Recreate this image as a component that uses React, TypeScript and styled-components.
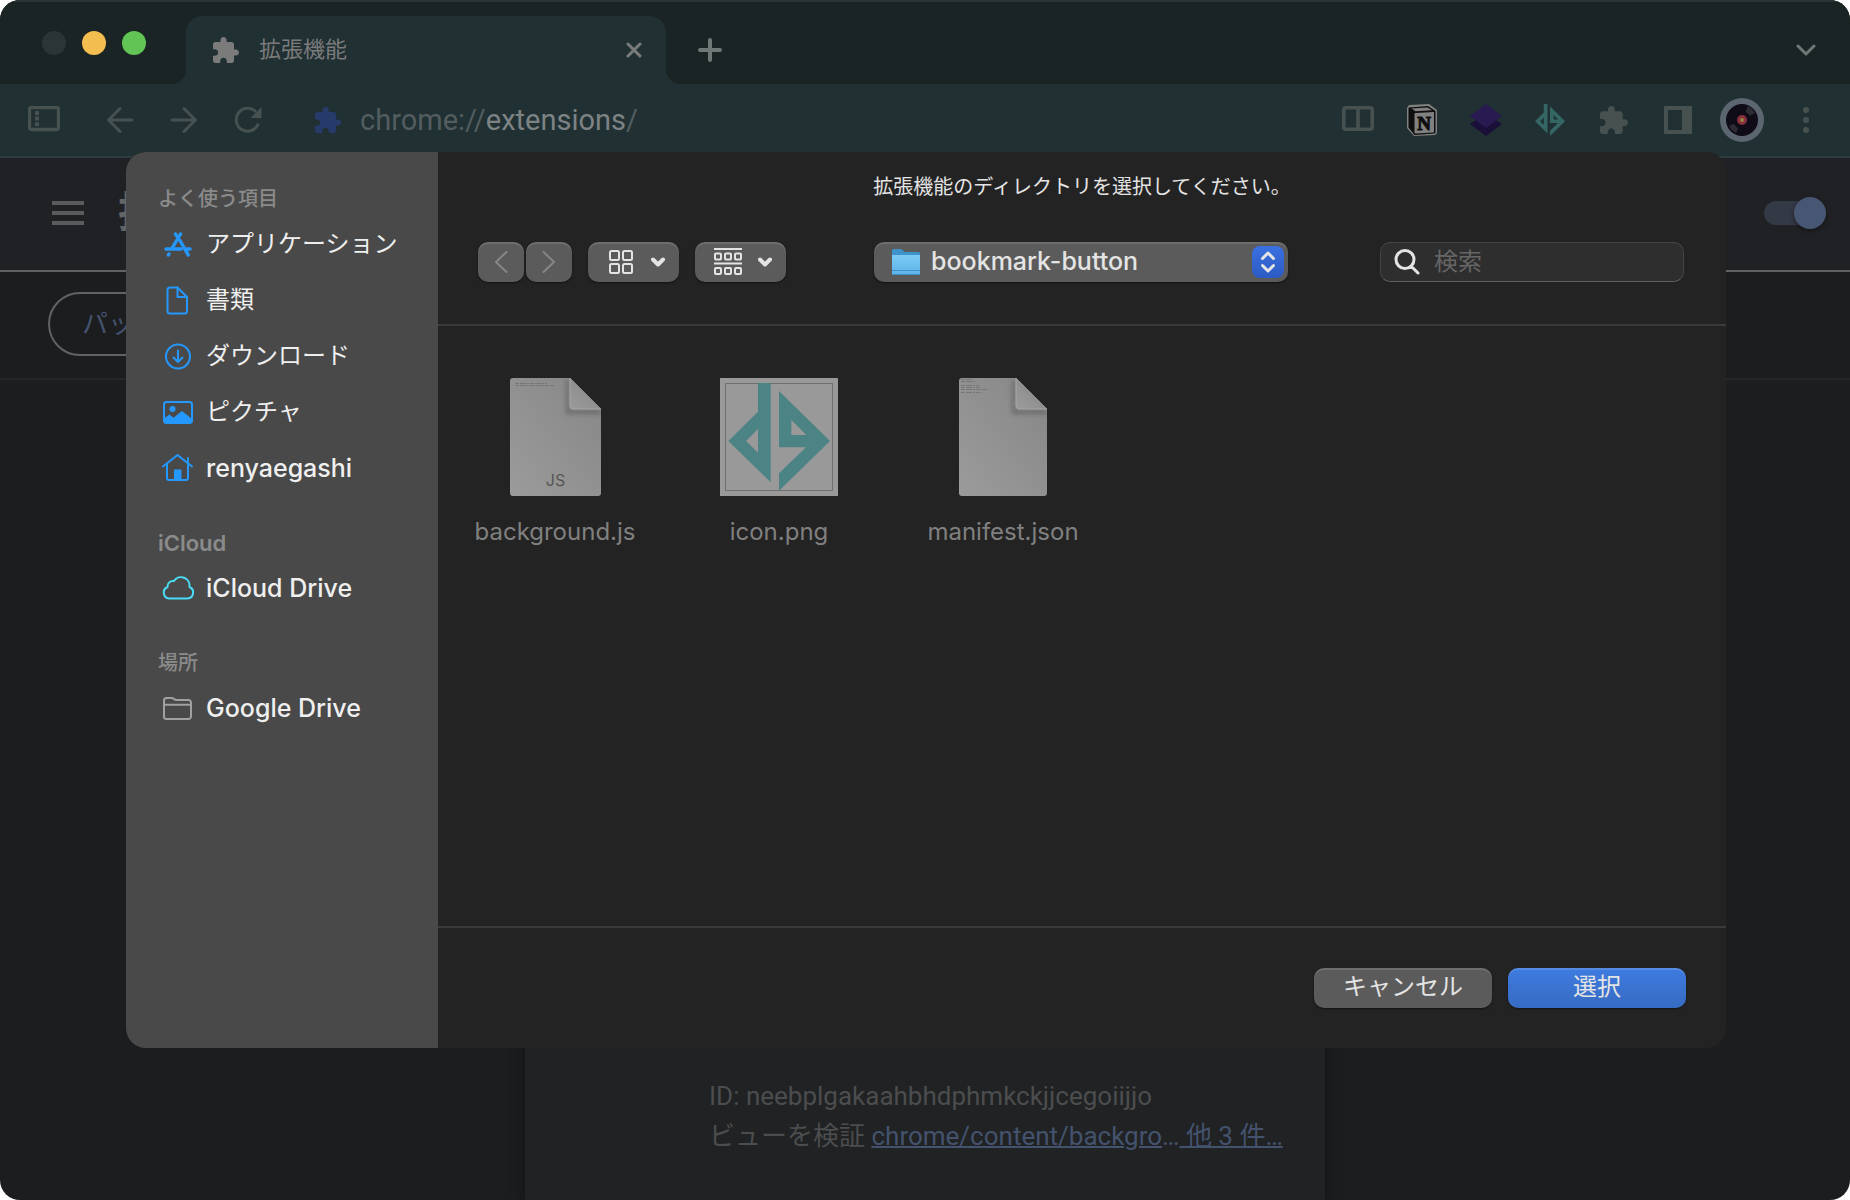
import React from "react";
import styled, { createGlobalStyle, css } from "styled-components";

const uiFont = `Inter, "Noto Sans CJK JP", sans-serif`;
const pageFont = `Roboto, "Noto Sans CJK JP", sans-serif`;

const GlobalStyle = createGlobalStyle`
  *, *::before, *::after { box-sizing: border-box; }
  body { margin: 0; background: #fff; }
  button, input, select { font: inherit; color: inherit; margin: 0; }
  button { border: 0; padding: 0; background: none; }
  h1, h2, p, ul { margin: 0; padding: 0; }
  svg { display: block; flex: none; }
`;

/* ---------- Browser window ---------- */

const BrowserWindow = styled.div`
  position: relative;
  display: flex;
  flex-direction: column;
  height: 100vh;
  min-height: 900px;
  overflow: hidden;
  border-radius: 20px;
  background: #1c1d1f;
  font-family: ${pageFont};
  line-height: 32px;
`;

const TabStrip = styled.header`
  display: flex;
  align-items: stretch;
  height: 84px;
  padding: 16px 22px 0 42px;
  background: #1a2424;
  box-shadow: inset 0 2px 0 #273536;
  color: #6f7777;
`;

const TrafficLights = styled.div`
  display: flex;
  gap: 16px;
  margin: 15px 40px 0 0;
`;

const Light = styled.button<{ $color: string }>`
  width: 24px;
  height: 24px;
  border-radius: 50%;
  background: ${(p) => p.$color};
`;

const Tab = styled.div`
  position: relative;
  display: flex;
  align-items: center;
  gap: 20px;
  width: 480px;
  padding: 0 24px 0 27px;
  border-radius: 16px 16px 0 0;
  background: #203033;
  color: #7b7b7b;
  font-size: 22px;

  &::before,
  &::after {
    content: "";
    position: absolute;
    bottom: 0;
    width: 14px;
    height: 14px;
  }
  &::before {
    left: -14px;
    background: radial-gradient(circle at 0 0, transparent 14px, #203033 14px);
  }
  &::after {
    right: -14px;
    background: radial-gradient(circle at 100% 0, transparent 14px, #203033 14px);
  }
`;

const TabTitle = styled.span`
  flex: 1;
`;

const NewTab = styled.button`
  margin: 0 auto 0 32px;
`;

const ToolbarButton = styled.button<{ $wide?: boolean }>`
  display: flex;
  align-items: center;
  justify-content: center;
  width: ${(p) => (p.$wide ? 44 : 32)}px;
`;

const Toolbar = styled.nav`
  display: flex;
  align-items: center;
  height: 74px;
  padding: 0 22px 0 28px;
  border-bottom: 2px solid #2d3d3f;
  background: #203033;
  color: #465150;
`;

const NavGroup = styled.div`
  display: flex;
  gap: 32px;
  margin-left: 44px;
`;

const AddressBar = styled.button`
  display: flex;
  flex: 1;
  align-items: center;
  gap: 19px;
  margin-left: 51px;
  color: #535d5f;
  font-size: 29px;
  text-align: left;
`;

const AddressHost = styled.span`
  color: #7d8284;
`;

const ExtensionGroup = styled.div`
  display: flex;
  align-items: center;
  gap: 20px;
`;

/* ---------- Extensions page ---------- */

const PageHeader = styled.header`
  display: flex;
  align-items: center;
  height: 114px;
  padding: 0 24px 2px 52px;
  border-bottom: 2px solid #5f6162;
  background: #202124;
  color: #5a5b5d;
`;

const PageTitle = styled.h1`
  margin: 0 auto 0 34px;
  color: #646567;
  font-size: 42px;
  font-weight: 700;
  line-height: 48px;
`;

const DevSwitch = styled.input`
  display: flex;
  align-items: center;
  justify-content: flex-end;
  appearance: none;
  width: 62px;
  height: 24px;
  border-radius: 12px;
  background: #333945;

  &::after {
    content: "";
    width: 32px;
    height: 32px;
    flex: none;
    border-radius: 50%;
    background: #475672;
    box-shadow: 0 2px 5px rgba(0, 0, 0, 0.4);
  }
`;

const DevToolbar = styled.div`
  display: flex;
  align-items: center;
  height: 108px;
  padding: 0 48px 2px;
  border-bottom: 2px solid #242628;
`;

const OutlineButton = styled.button`
  height: 64px;
  padding: 0 32px;
  border: 2px solid #606264;
  border-radius: 32px;
  color: #44526e;
  font-size: 26px;
  white-space: nowrap;
`;

const CardArea = styled.main`
  display: flex;
  flex: 1;
  justify-content: center;
  padding-top: 40px;
`;

const ExtensionCard = styled.article`
  display: flex;
  flex-direction: column;
  justify-content: flex-end;
  width: 800px;
  padding: 0 32px 44px 184px;
  background: #202223;
  box-shadow: 0 2px 14px rgba(0, 0, 0, 0.35);
  color: #4c4d4e;
  font-size: 26px;
  line-height: 40px;
  white-space: nowrap;
`;

const InspectLink = styled.a`
  color: #44526e;
  text-decoration-thickness: 2px;
`;

const Ellipsis = styled.span`
  display: inline-block;
`;

/* ---------- File chooser dialog ---------- */

const Dialog = styled.section`
  position: absolute;
  inset: 152px 124px 152px 126px;
  display: flex;
  overflow: hidden;
  border-radius: 20px;
  background: #232323;
  color: #e4e4e4;
  font-family: ${uiFont};
  font-size: 24px;
`;

const Sidebar = styled.aside`
  display: flex;
  flex-direction: column;
  flex: none;
  gap: 28px;
  width: 312px;
  padding: 28px 32px;
  background: #494949;
`;

const SidebarHeading = styled.h2<{ $latin: boolean }>`
  padding-top: 2px;
  color: #8b8b8b;
  font-size: ${(p) => (p.$latin ? 22 : 20)}px;
  font-weight: ${(p) => (p.$latin ? 600 : 500)};
  line-height: 34px;
`;

const SidebarList = styled.ul`
  list-style: none;
`;

const SidebarLink = styled.button<{ $tint: string; $latin: boolean }>`
  display: flex;
  align-items: center;
  gap: 10px;
  height: 56px;
  padding-left: 2px;
  color: #efefef;
  font-size: ${(p) => (p.$latin ? 25 : 24)}px;
  font-weight: ${(p) => (p.$latin ? 500 : 400)};
  white-space: nowrap;

  svg {
    width: 36px;
    color: ${(p) => p.$tint};
  }
`;

const Chooser = styled.div`
  display: flex;
  flex: 1;
  flex-direction: column;
  min-width: 0;
`;

const Message = styled.h2`
  padding: 20px 40px 0;
  font-size: 20px;
  font-weight: 400;
  line-height: 30px;
  text-align: center;
`;

const ControlBar = styled.div`
  display: grid;
  grid-template-columns: 1fr 414px 1fr;
  align-items: center;
  height: 124px;
  padding: 0 42px 2px 40px;
  border-bottom: 2px solid #3a3a3a;
`;

const ControlGroup = styled.div`
  display: flex;
  gap: 16px;
`;

const ButtonPair = styled.div`
  display: flex;
  gap: 2px;
`;

const raised = css`
  height: 40px;
  border-radius: 10px;
  background: #5b5b5b;
  box-shadow: inset 0 2px 0 rgba(255, 255, 255, 0.12), 0 1px 2px rgba(0, 0, 0, 0.5);
`;

const HistoryButton = styled.button`
  ${raised}
  display: flex;
  align-items: center;
  justify-content: center;
  width: 46px;
  color: #868686;
`;

const ViewButton = styled.button`
  ${raised}
  display: flex;
  align-items: center;
  gap: 16px;
  padding: 0 14px 0 19px;
`;

const FolderPicker = styled.label`
  ${raised}
  position: relative;
  display: block;

  > svg {
    position: absolute;
    top: 7px;
    left: 18px;
    pointer-events: none;
  }
`;

const FolderSelect = styled.select`
  appearance: none;
  width: 100%;
  height: 40px;
  padding: 0 48px 2px 57px;
  border: 0;
  background: none;
  font-size: 25px;
  font-weight: 500;
`;

const Stepper = styled.span`
  position: absolute;
  top: 4px;
  right: 4px;
  display: flex;
  align-items: center;
  justify-content: center;
  width: 32px;
  height: 32px;
  border-radius: 8px;
  background: linear-gradient(#3a70e0, #2c5bc4);
  pointer-events: none;
`;

const SearchField = styled.label`
  display: flex;
  align-items: center;
  gap: 14px;
  justify-self: end;
  width: 304px;
  height: 40px;
  padding: 0 13px;
  border: 1px solid #444;
  border-bottom-color: #606060;
  border-radius: 10px;
  background: #2e2e2e;
`;

const SearchInput = styled.input`
  flex: 1;
  min-width: 0;
  padding: 0;
  border: 0;
  outline: 0;
  background: none;

  &::placeholder {
    color: #666;
    opacity: 1;
  }
`;

const FileGrid = styled.ul`
  display: flex;
  flex: 1;
  flex-wrap: wrap;
  align-content: flex-start;
  padding: 52px 5px;
  list-style: none;
`;

const FileItem = styled.li`
  display: flex;
  flex-direction: column;
  align-items: center;
  gap: 20px;
  width: 224px;
  color: #808080;
`;

const Footer = styled.footer`
  display: flex;
  justify-content: flex-end;
  gap: 16px;
  height: 122px;
  padding: 40px 40px 0;
  border-top: 2px solid #3a3a3a;
`;

const DialogButton = styled.button<{ $primary?: boolean }>`
  ${raised}
  width: 178px;
  padding-bottom: 2px;
  ${(p) => p.$primary && "background: linear-gradient(#3e7be0, #366bc2);"}
`;

/* ---------- Drawings ---------- */

const PuzzleIcon = ({ size, color = "currentColor" }: { size: number; color?: string }) => (
  <svg width={size} height={size} viewBox="2 1 21 21" fill={color} aria-hidden="true">
    <path d="M20.5 11H19V7c0-1.1-.9-2-2-2h-4V3.5C13 2.12 11.88 1 10.5 1S8 2.12 8 3.5V5H4c-1.1 0-1.99.9-1.99 2v3.8H3.5c1.49 0 2.7 1.21 2.7 2.7s-1.21 2.7-2.7 2.7H2V20c0 1.1.9 2 2 2h3.8v-1.5c0-1.49 1.21-2.7 2.7-2.7 1.49 0 2.7 1.21 2.7 2.7V22H17c1.1 0 2-.9 2-2v-4h1.5c1.38 0 2.5-1.12 2.5-2.5S21.88 11 20.5 11z" />
  </svg>
);

type StrokeProps = {
  w: number;
  h: number;
  d: string;
  width?: number;
  cap?: "round" | "butt";
};

const StrokeIcon = ({ w, h, d, width = 3, cap = "round" }: StrokeProps) => (
  <svg
    width={w}
    height={h}
    viewBox={`0 0 ${w} ${h}`}
    fill="none"
    stroke="currentColor"
    strokeWidth={width}
    strokeLinecap={cap}
    strokeLinejoin="round"
    aria-hidden="true"
  >
    <path d={d} />
  </svg>
);

const SidePanelListIcon = () => (
  <svg width="32" height="28" viewBox="0 0 32 28" fill="none" stroke="currentColor" aria-hidden="true">
    <rect x="1.5" y="1.5" width="29" height="22" rx="2" strokeWidth="3.4" />
    <path d="M9 5v15" strokeWidth="4" strokeDasharray="4 1.6" />
  </svg>
);

const ReloadIcon = () => (
  <svg width="28" height="28" viewBox="0 0 28 28" fill="none" aria-hidden="true">
    <path d="M24.4 17.5A11.4 11.4 0 1 1 22 6" stroke="currentColor" strokeWidth="3" />
    <path d="M27.5 1v11h-11z" fill="currentColor" />
  </svg>
);

const SplitIcon = () => (
  <svg width="32" height="28" viewBox="0 0 32 28" fill="none" stroke="currentColor" strokeWidth="3.6" aria-hidden="true">
    <rect x="1.8" y="1.8" width="28.4" height="21.4" rx="2" />
    <path d="M16 2v21" />
  </svg>
);

const NotionIcon = () => (
  <svg width="32" height="32" viewBox="0 0 32 32" aria-hidden="true">
    <path d="M3 1 23 0 31 6v23l-2 2-21 1-7-8V4z" fill="#818181" />
    <path d="M3 3.5 22 2l7.5 5v21.5l-1 1L8.500 31 2.500 23.500V4z" fill="#0e0e0e" />
    <path d="M5.500 4.500 21.500 3.500 26 6.200 9.500 7.200z" fill="#818181" />
    <path d="M8.500 10q0-1 1-1L28 8v19.500q0 1-1 1L9.500 29.400q-1 0-1-1z" fill="#818181" />
    <text x="18.200" y="25.500" fontSize="19" fontWeight="700" fontFamily="Liberation Serif, serif" textAnchor="middle" fill="#0e0e0e" stroke="#0e0e0e">
      N
    </text>
  </svg>
);

const LayersIcon = () => (
  <svg width="32" height="32" viewBox="0 0 32 32" aria-hidden="true">
    <path d="M16 9.500 32 20 16 32 0 20z" fill="#190f38" />
    <path d="M16 0 32 12 16 24 0 12z" fill="#291a51" />
  </svg>
);

const dgPath =
  "M777 39h38v298L688 213l89-88zM777 177l-36 36 36 35zM840 63l153 150-153 149v-52l81-78h-81zM877 150v45h45z";

const DgIcon = () => (
  <svg width="32" height="32" viewBox="678 39 324 324" fill="#346664" fillRule="evenodd" aria-hidden="true">
    <path d={dgPath} />
  </svg>
);

const SidePanelIcon = () => (
  <svg width="28" height="28" viewBox="0 0 28 28" fill="currentColor" fillRule="evenodd" aria-hidden="true">
    <path d="M0 0h28v28H0zM4 4v20h14V4z" />
  </svg>
);

const VinylAvatar = () => (
  <svg width="44" height="44" viewBox="0 0 44 44" aria-hidden="true">
    <circle cx="22" cy="22" r="22" fill="#5b6670" />
    <circle cx="22" cy="22" r="16" fill="#0f0c18" />
    <path d="M22 22 28 8a15 15 0 0 1 7 7z" fill="#2c2b33" />
    <path d="M22 22 9 28a15 15 0 0 0 7 7z" fill="#2c2b33" />
    <circle cx="22" cy="22" r="9" fill="#0f0c18" />
    <circle cx="22" cy="22" r="5" fill="#88303f" />
    <circle cx="22" cy="22" r="2" fill="#97843f" />
  </svg>
);

const MoreIcon = () => (
  <svg width="6" height="28" viewBox="0 0 6 28" fill="currentColor" aria-hidden="true">
    <circle cx="3" cy="4" r="3" />
    <circle cx="3" cy="14" r="3" />
    <circle cx="3" cy="24" r="3" />
  </svg>
);

const MenuIcon = () => (
  <svg width="32" height="24" viewBox="0 0 32 24" fill="currentColor" aria-hidden="true">
    <path d="M0 0h32v4H0zM0 10h32v4H0zM0 20h32v4H0z" />
  </svg>
);

const sideSvg = {
  height: 32,
  width: 36,
  viewBox: "0 0 36 32",
  fill: "none",
  stroke: "currentColor",
  strokeWidth: 2,
  strokeLinecap: "round" as const,
  strokeLinejoin: "round" as const,
  "aria-hidden": true,
};

const AppsIcon = () => (
  <svg {...sideSvg} strokeWidth={3.4}>
    <path d="M20.500 6 12.500 19.500M9 26l-.6 1M15.500 6l1.200 2M20 12.500l8.200 14.500M6 21h15M26.500 21h3.500" />
  </svg>
);
const DocIcon = () => (
  <svg {...sideSvg}>
    <path d="M10 3.500h7.500L27 13v14a2.500 2.500 0 0 1-2.500 2.500H10A2.500 2.500 0 0 1 7.500 27V6A2.500 2.500 0 0 1 10 3.500z" />
    <path d="M17.500 3.500V13H27" />
  </svg>
);
const DownloadIcon = () => (
  <svg {...sideSvg}>
    <circle cx="18" cy="16.500" r="12" />
    <path d="M18 10.500V22M13.500 17.500l4.500 4.500 4.500-4.500" />
  </svg>
);
const PictureIcon = () => (
  <svg {...sideSvg}>
    <rect x="4" y="6" width="28" height="21" rx="2.500" />
    <circle cx="12.500" cy="13" r="3" fill="currentColor" stroke="none" />
    <path d="M4 22.500l5.500-4 4 3.200 8.500-6.700 10 8v2.500q0 1.500-1.500 1.500h-25Q4 27 4 25.500z" fill="currentColor" stroke="none" />
  </svg>
);
const HomeIcon = () => (
  <svg {...sideSvg}>
    <path d="M3 14.500 17.500 3 32 14.500M7 12.500V26a2 2 0 0 0 2 2h17a2 2 0 0 0 2-2V12.500M28 10.500V6" />
    <path d="M14 28V17.500h7.500V28z" fill="currentColor" stroke="none" />
  </svg>
);
const CloudIcon = () => (
  <svg {...sideSvg}>
    <path d="M9 26.500a6 6 0 0 1-1.500-11.500 5.500 5.500 0 0 1 6.500-6A8.500 8.500 0 0 1 29.500 15 6 6 0 0 1 27.500 26.500z" />
  </svg>
);
const FolderIcon = () => (
  <svg {...sideSvg}>
    <path d="M4 24.500v-16A2.500 2.500 0 0 1 6.500 6h5q1.500 0 2.500 1t2.500 1h12A2.500 2.500 0 0 1 31 10.500v14A2.500 2.500 0 0 1 28.500 27h-22A2.500 2.500 0 0 1 4 24.500zM4 12.800h27" />
  </svg>
);

const GridViewIcon = () => (
  <svg width="28" height="28" viewBox="0 0 28 28" fill="none" stroke="currentColor" strokeWidth="2" aria-hidden="true">
    <rect x="3" y="3" width="9" height="9" rx="1.500" />
    <rect x="16" y="3" width="9" height="9" rx="1.500" />
    <rect x="3" y="16" width="9" height="9" rx="1.500" />
    <rect x="16" y="16" width="9" height="9" rx="1.500" />
  </svg>
);

const GroupViewIcon = () => (
  <svg width="28" height="28" viewBox="0 0 28 28" fill="none" stroke="currentColor" strokeWidth="2" aria-hidden="true">
    <path d="M0 1h28M0 15.500h28" />
    {[5.500, 20].map((y) =>
      [1, 11, 21].map((x) => <rect key={`${x}-${y}`} x={x} y={y} width="6" height="6" rx="1" />),
    )}
  </svg>
);

const ChevronDown = () => <StrokeIcon w={14} h={10} width={4} d="M2 2.500l5 5 5-5" />;

const BlueFolder = () => (
  <svg width="28" height="27" viewBox="0 0 28 27" aria-hidden="true">
    <defs>
      <linearGradient id="folder-front" x1="0" y1="0" x2="0" y2="1">
        <stop offset="0" stopColor="#7ccbf5" />
        <stop offset="1" stopColor="#5bb3e6" />
      </linearGradient>
    </defs>
    <path d="M0 1.500Q0 0 1.500 0h7q1.500 0 2.500 1.500T14 3h12.500Q28 3 28 4.500V25H0z" fill="#3f93cb" />
    <path d="M0 6h28v19q0 1-1 1H1q-1 0-1-1z" fill="url(#folder-front)" />
    <path d="M0 21.500h28M0 25.500h28" stroke="#3f93cb" />
  </svg>
);

const DocumentThumb = ({ width, label, lines }: { width: number; label?: string; lines: string }) => (
  <svg width={width} height="118" viewBox={`0 0 ${width} 118`} aria-hidden="true">
    <defs>
      <linearGradient id={`paper-${width}`} x1="1" y1="0" x2="0" y2="1">
        <stop offset="0" stopColor="#868686" />
        <stop offset="1" stopColor="#9b9b9b" />
      </linearGradient>
      <linearGradient id={`fold-${width}`} x1="0" y1="1" x2="1" y2="0">
        <stop offset="0" stopColor="#9b9b9b" />
        <stop offset="1" stopColor="#858585" />
      </linearGradient>
      <filter id={`soft-${width}`} x="-50%" y="-50%" width="200%" height="200%">
        <feGaussianBlur stdDeviation="2" />
      </filter>
      <clipPath id={`clip-${width}`}>
        <path d={`M3 0h${width - 34}l31 31v84q0 3-3 3H3q-3 0-3-3V3q0-3 3-3z`} />
      </clipPath>
    </defs>
    <g clipPath={`url(#clip-${width})`}>
      <rect width={width} height="118" fill={`url(#paper-${width})`} />
      <path d={`M${width - 32} 2v30h32v4h-35V2z`} fill="#555" opacity="0.6" filter={`url(#soft-${width})`} />
      <path d={`M${width - 31} 0v28q0 3 3 3h28z`} fill={`url(#fold-${width})`} stroke="#a5a5a5" />
      <path d={lines} stroke="#666" strokeOpacity="0.6" strokeDasharray="4 1 6 1 2 1" />
    </g>
    {label && (
      <text x={width / 2} y="108" fontSize="16" fontFamily="Inter, sans-serif" textAnchor="middle" fill="#565656">
        {label}
      </text>
    )}
  </svg>
);

const ImageThumb = () => (
  <svg width="118" height="118" viewBox="0 0 118 118" aria-hidden="true">
    <rect width="118" height="118" fill="#999" />
    <rect x="5.500" y="5.500" width="107" height="107" fill="none" stroke="#717171" />
    <svg x="5" y="5" width="108" height="108" viewBox="678 39 324 324" fill="#4c8384" fillRule="evenodd">
      <path d={dgPath} />
    </svg>
  </svg>
);

/* ---------- Data ---------- */

const blue = "#2498fd";

const sections = [
  {
    title: "よく使う項目",
    items: [
      { name: "アプリケーション", tint: blue, Icon: AppsIcon },
      { name: "書類", tint: blue, Icon: DocIcon },
      { name: "ダウンロード", tint: blue, Icon: DownloadIcon },
      { name: "ピクチャ", tint: blue, Icon: PictureIcon },
      { name: "renyaegashi", tint: blue, Icon: HomeIcon },
    ],
  },
  { title: "iCloud", items: [{ name: "iCloud Drive", tint: "#4bdcf5", Icon: CloudIcon }] },
  { title: "場所", items: [{ name: "Google Drive", tint: "#a0a0a0", Icon: FolderIcon }] },
];

const isLatin = (text: string) => /^[\x20-\x7e]+$/.test(text);

const files = [
  { name: "background.js", thumb: <DocumentThumb width={91} label="JS" lines="M5 5.500h32M5 7.500h39" /> },
  { name: "icon.png", thumb: <ImageThumb /> },
  {
    name: "manifest.json",
    thumb: <DocumentThumb width={88} lines="M2 1.500h12M2 3.500h14M2 7.500h18M2 9.500h20M2 11.500h26M2 14.500h21" />,
  },
];

export default function App() {
  return (
    <>
      <GlobalStyle />
      <BrowserWindow>
        <TabStrip>
          <TrafficLights>
            <Light $color="#2b3535" aria-label="閉じる" />
            <Light $color="#f4bd50" aria-label="しまう" />
            <Light $color="#61c454" aria-label="拡大" />
          </TrafficLights>
          <Tab>
            <PuzzleIcon size={26} />
            <TabTitle>拡張機能</TabTitle>
            <button aria-label="タブを閉じる">
              <StrokeIcon w={16} h={16} d="M2 2l12 12M14 2 2 14" />
            </button>
          </Tab>
          <NewTab aria-label="新しいタブ">
            <StrokeIcon w={24} h={24} width={4} d="M12 2v20M2 12h20" />
          </NewTab>
          <ToolbarButton $wide aria-label="タブを検索">
            <StrokeIcon w={20} h={14} d="M2 3l8 8 8-8" />
          </ToolbarButton>
        </TabStrip>

        <Toolbar>
          <ToolbarButton aria-label="サイドバー">
            <SidePanelListIcon />
          </ToolbarButton>
          <NavGroup>
            <ToolbarButton aria-label="戻る">
              <StrokeIcon w={28} h={28} d="M26 14H3M14 2.500 2.500 14 14 25.500" />
            </ToolbarButton>
            <ToolbarButton aria-label="進む">
              <StrokeIcon w={28} h={28} d="M2 14h23M14 2.500 25.500 14 14 25.500" />
            </ToolbarButton>
            <ToolbarButton aria-label="再読み込み">
              <ReloadIcon />
            </ToolbarButton>
          </NavGroup>
          <AddressBar>
            <PuzzleIcon size={26} color="#273b6b" />
            <span>
              chrome://<AddressHost>extensions</AddressHost>/
            </span>
          </AddressBar>
          <ExtensionGroup>
            <ToolbarButton $wide aria-label="分割表示">
              <SplitIcon />
            </ToolbarButton>
            <ToolbarButton $wide aria-label="Notion">
              <NotionIcon />
            </ToolbarButton>
            <ToolbarButton $wide aria-label="レイヤー">
              <LayersIcon />
            </ToolbarButton>
            <ToolbarButton $wide aria-label="bookmark-button">
              <DgIcon />
            </ToolbarButton>
            <ToolbarButton $wide aria-label="拡張機能">
              <PuzzleIcon size={28} />
            </ToolbarButton>
            <ToolbarButton $wide aria-label="サイドパネル">
              <SidePanelIcon />
            </ToolbarButton>
            <ToolbarButton $wide aria-label="プロフィール">
              <VinylAvatar />
            </ToolbarButton>
            <ToolbarButton $wide aria-label="メニュー">
              <MoreIcon />
            </ToolbarButton>
          </ExtensionGroup>
        </Toolbar>

        <PageHeader>
          <button aria-label="メインメニュー">
            <MenuIcon />
          </button>
          <PageTitle>拡張機能</PageTitle>
          <DevSwitch type="checkbox" role="switch" aria-label="デベロッパー モード" defaultChecked />
        </PageHeader>
        <DevToolbar>
          <OutlineButton>パッケージ化されていない拡張機能を読み込む</OutlineButton>
        </DevToolbar>
        <CardArea>
          <ExtensionCard>
            <p>ID: neebplgakaahbhdphmkckjjcegoiijjo</p>
            <p>
              ビューを検証{" "}
              <InspectLink href="#background">
                chrome/content/backgro<Ellipsis>…</Ellipsis>
              </InspectLink>
              <InspectLink href="#more"> 他 3 件…</InspectLink>
            </p>
          </ExtensionCard>
        </CardArea>

        <Dialog role="dialog" aria-labelledby="dialog-message">
          <Sidebar>
            {sections.map((section) => (
              <section key={section.title}>
                <SidebarHeading $latin={isLatin(section.title)}>{section.title}</SidebarHeading>
                <SidebarList>
                  {section.items.map(({ name, tint, Icon }) => (
                    <li key={name}>
                      <SidebarLink $tint={tint} $latin={isLatin(name)}>
                        <Icon />
                        {name}
                      </SidebarLink>
                    </li>
                  ))}
                </SidebarList>
              </section>
            ))}
          </Sidebar>

          <Chooser>
            <Message id="dialog-message">拡張機能のディレクトリを選択してください。</Message>
            <ControlBar>
              <ControlGroup>
                <ButtonPair>
                  <HistoryButton aria-label="戻る">
                    <StrokeIcon w={14} h={24} width={2} d="M12.500 2 2 12l10.500 10" />
                  </HistoryButton>
                  <HistoryButton aria-label="進む">
                    <StrokeIcon w={14} h={24} width={2} d="M1.500 2 12 12 1.500 22" />
                  </HistoryButton>
                </ButtonPair>
                <ViewButton aria-label="アイコン表示">
                  <GridViewIcon />
                  <ChevronDown />
                </ViewButton>
                <ViewButton aria-label="グループ分け">
                  <GroupViewIcon />
                  <ChevronDown />
                </ViewButton>
              </ControlGroup>
              <FolderPicker>
                <BlueFolder />
                <FolderSelect aria-label="フォルダ" defaultValue="bookmark-button">
                  <option>bookmark-button</option>
                </FolderSelect>
                <Stepper>
                  <StrokeIcon w={16} h={24} d="M2.500 8.500 8 3l5.500 5.500M2.500 15.500 8 21l5.500-5.500" />
                </Stepper>
              </FolderPicker>
              <SearchField>
                <StrokeIcon w={26} h={26} d="M20 10.500a9 9 0 1 1-18 0 9 9 0 0 1 18 0zM17.500 17.500l6.500 6.500" />
                <SearchInput type="search" placeholder="検索" aria-label="検索" />
              </SearchField>
            </ControlBar>

            <FileGrid>
              {files.map((file) => (
                <FileItem key={file.name}>
                  {file.thumb}
                  {file.name}
                </FileItem>
              ))}
            </FileGrid>

            <Footer>
              <DialogButton>キャンセル</DialogButton>
              <DialogButton $primary>選択</DialogButton>
            </Footer>
          </Chooser>
        </Dialog>
      </BrowserWindow>
    </>
  );
}
